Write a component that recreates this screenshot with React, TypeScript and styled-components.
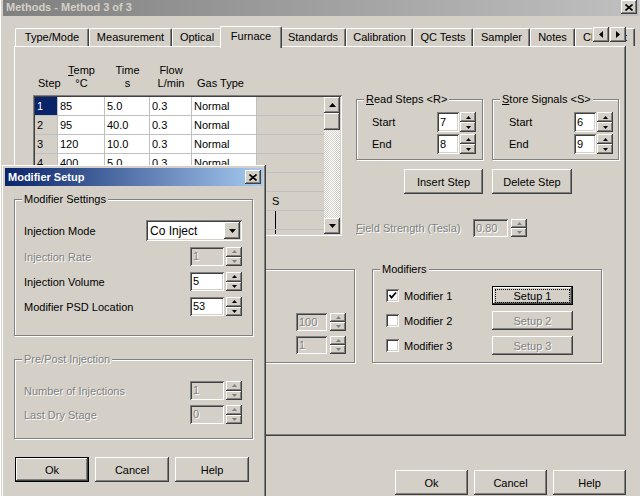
import React from 'react';
import styled, { createGlobalStyle, css } from 'styled-components';

const FACE = '#d4d0c8';

const GlobalStyle = createGlobalStyle`
  html, body { margin: 0; padding: 0; }
  body {
    font-family: "Liberation Sans", Arial, sans-serif;
    font-size: 11px;
    color: #000;
    background: ${FACE};
  }
  * { box-sizing: border-box; }
`;

const raised = css`
  background: ${FACE};
  box-shadow: inset -1px -1px #404040, inset 1px 1px #fff, inset -2px -2px #808080,
    inset 2px 2px ${FACE};
`;

const sunken = css`
  box-shadow: inset 1px 1px #808080, inset -1px -1px #fff, inset 2px 2px #404040,
    inset -2px -2px ${FACE};
`;

const disabledText = css`
  color: #808080;
  text-shadow: 1px 1px #fff;
`;

const Screen = styled.div`
  position: relative;
  width: 640px;
  height: 496px;
  overflow: hidden;
  background: ${FACE};
`;

const MainWindow = styled.div`
  display: flex;
  flex-direction: column;
  width: 642px;
  height: 520px;
  margin-top: -5px;
  padding: 3px;
  ${raised}
`;

const TitleBar = styled.div<{ $active?: boolean }>`
  display: flex;
  flex: none;
  align-items: center;
  justify-content: space-between;
  height: 18px;
  padding: 0 2px 0 3px;
  background: ${({ $active }) =>
    $active
      ? 'linear-gradient(to right, #0a246a, #a6caf0)'
      : 'linear-gradient(to right, #808080, #c0c0c0)'};
  color: ${({ $active }) => ($active ? '#fff' : FACE)};
  font-weight: bold;
  font-size: 11px;
  white-space: nowrap;
`;

const CloseButton = styled.div`
  display: flex;
  align-items: center;
  justify-content: center;
  width: 16px;
  height: 14px;
  ${raised}
`;

const TabStrip = styled.div`
  position: relative;
  display: flex;
  flex: none;
  align-items: flex-end;
  width: 623px;
  height: 20px;
  margin-top: 10px;
  padding-left: 12px;
  z-index: 1;
`;

const Tab = styled.div<{ $w: number; $active?: boolean }>`
  flex: none;
  width: ${({ $w }) => $w}px;
  height: 18px;
  line-height: 16px;
  text-align: center;
  white-space: nowrap;
  overflow: hidden;
  background: ${FACE};
  border-top: 1px solid #fff;
  border-left: 1px solid #fff;
  border-right: 1px solid #404040;
  border-radius: 2px 2px 0 0;
  box-shadow: inset -1px 0 #808080;
  ${({ $active, $w }) =>
    $active &&
    css`
      width: ${$w + 4}px;
      height: 22px;
      margin: 0 -2px -2px;
      padding-top: 1px;
      position: relative;
      z-index: 2;
    `}
`;

const TabScroll = styled.div`
  position: absolute;
  right: 0;
  bottom: 4px;
  display: flex;
  gap: 1px;
  padding-left: 1px;
  background: ${FACE};
  z-index: 3;
`;

const SmallButton = styled.div<{ $w: number; $h: number }>`
  display: flex;
  align-items: center;
  justify-content: center;
  width: ${({ $w }) => $w}px;
  height: ${({ $h }) => $h}px;
  ${raised}
`;

const TabPanel = styled.div`
  position: relative;
  flex: none;
  width: 612px;
  height: 390px;
  margin-left: 11px;
  padding: 18px 0 0 19px;
  ${raised}
`;

const TopArea = styled.div`
  display: flex;
`;

const LeftCol = styled.div`
  width: 309px;
`;

const GridHeader = styled.div`
  display: grid;
  grid-template-columns: 25px 47px 45px 42px 65px;
  align-items: end;
  height: 31px;
  padding-bottom: 5px;
  line-height: 13px;
`;

const HeadCell = styled.div<{ $align?: string }>`
  text-align: ${({ $align }) => $align || 'center'};
  padding-left: ${({ $align }) => ($align === 'left' ? '5px' : '0')};
  white-space: nowrap;
`;

const GridBox = styled.div`
  display: flex;
  width: 309px;
  height: 141px;
  padding: 2px;
  background: ${FACE};
  ${sunken}
`;

const GridRows = styled.div`
  flex: 1;
  overflow: hidden;
`;

const GridRow = styled.div`
  display: grid;
  grid-template-columns: 23px 47px 45px 42px 65px 1fr;
  height: 19px;
`;

const Cell = styled.div<{ $kind: 'step' | 'data' | 'blank'; $selected?: boolean }>`
  position: relative;
  height: 19px;
  padding-left: 2px;
  line-height: 18px;
  white-space: nowrap;
  overflow: hidden;
  border-bottom: 1px solid #c0c0c0;
  border-right: ${({ $kind }) => ($kind === 'blank' ? 'none' : '1px solid #c0c0c0')};
  background: ${({ $kind, $selected }) =>
    $selected ? '#0a246a' : $kind === 'data' ? '#fff' : FACE};
  color: ${({ $selected }) => ($selected ? '#fff' : '#000')};
`;

const MarkText = styled.span`
  padding-left: 13px;
`;

const MarkLine = styled.span`
  position: absolute;
  left: 18px;
  top: 0;
  width: 1px;
  height: 19px;
  background: #000;
`;

const ScrollBar = styled.div`
  display: flex;
  flex-direction: column;
  width: 16px;
`;

const ScrollTrack = styled.div`
  flex: 1;
  background: repeating-conic-gradient(#fff 0 25%, ${FACE} 0 50%) 0 0 / 2px 2px;
`;

const RightCol = styled.div`
  display: flex;
  flex-direction: column;
  margin-left: 14px;
`;

const GroupRow = styled.div`
  display: flex;
  gap: 9px;
  margin-top: 35px;
`;

const GroupBox = styled.div<{ $w: number; $h: number; $pad?: string }>`
  position: relative;
  width: ${({ $w }) => $w}px;
  height: ${({ $h }) => $h}px;
  padding: ${({ $pad }) => $pad || '0'};
  border: 1px solid #808080;
  box-shadow: inset 1px 1px #fff, 1px 1px #fff;
`;

const Legend = styled.span<{ $disabled?: boolean }>`
  position: absolute;
  top: -7px;
  left: 7px;
  padding: 0 2px;
  line-height: 13px;
  background: ${FACE};
  white-space: nowrap;
  ${({ $disabled }) => $disabled && disabledText}
`;

const FieldLine = styled.div<{ $labelW?: number }>`
  display: flex;
  align-items: center;
  height: 20px;
  & > span:first-child {
    width: ${({ $labelW }) => $labelW || 0}px;
    flex: none;
  }
`;

const StackRows = styled.div<{ $gap: number; $align?: string }>`
  display: flex;
  flex-direction: column;
  align-items: ${({ $align }) => $align || 'stretch'};
  gap: ${({ $gap }) => $gap}px;
`;

const Label = styled.span<{ $disabled?: boolean }>`
  white-space: nowrap;
  ${({ $disabled }) => $disabled && disabledText}
`;

const Button = styled.div<{ $w: number; $h: number; $default?: boolean; $disabled?: boolean }>`
  display: flex;
  align-items: center;
  justify-content: center;
  flex: none;
  width: ${({ $w }) => $w}px;
  height: ${({ $h }) => $h}px;
  ${raised}
  ${({ $default }) =>
    $default &&
    css`
      box-shadow: inset 0 0 0 1px #000, inset -2px -2px #404040, inset 2px 2px #fff,
        inset -3px -3px #808080;
    `}
  ${({ $disabled }) => $disabled && disabledText}
`;

const FocusRect = styled.span`
  display: flex;
  align-items: center;
  justify-content: center;
  width: 73px;
  height: 12px;
  outline: 1px dotted #000;
`;

const ButtonRow = styled.div<{ $gap: number; $pad?: string; $justify?: string }>`
  display: flex;
  gap: ${({ $gap }) => $gap}px;
  padding: ${({ $pad }) => $pad || '0'};
  justify-content: ${({ $justify }) => $justify || 'flex-start'};
`;

const BottomArea = styled.div`
  display: flex;
  margin-top: 31px;
`;

const CheckRow = styled.div`
  display: flex;
  align-items: center;
  height: 19px;
`;

const CheckBox = styled.span`
  display: flex;
  align-items: center;
  justify-content: center;
  width: 13px;
  height: 13px;
  margin-right: 5px;
  background: #fff;
  ${sunken}
`;

const SpinWrap = styled.div<{ $gap: number }>`
  display: flex;
  gap: ${({ $gap }) => $gap}px;
  flex: none;
`;

const EditBox = styled.div<{ $w: number; $h: number; $disabled?: boolean }>`
  width: ${({ $w }) => $w}px;
  height: ${({ $h }) => $h}px;
  padding: 0 3px;
  line-height: ${({ $h }) => $h}px;
  background: ${({ $disabled }) => ($disabled ? FACE : '#fff')};
  ${sunken}
  ${({ $disabled }) => $disabled && disabledText}
`;

const SpinButtons = styled.div<{ $h: number }>`
  display: flex;
  flex-direction: column;
  width: 16px;
  height: ${({ $h }) => $h}px;
  & > div {
    flex: 1;
  }
`;

const SpinHalf = styled.div`
  display: flex;
  align-items: center;
  justify-content: center;
  ${raised}
`;

const Modal = styled.div`
  position: absolute;
  left: 2px;
  top: 165px;
  display: flex;
  flex-direction: column;
  width: 264px;
  height: 340px;
  padding: 3px;
  z-index: 10;
  ${raised}
`;

const ModalBody = styled.div`
  display: flex;
  flex-direction: column;
  padding: 13px 0 0 9px;
`;

const SettingRow = styled.div<{ $h: number }>`
  display: flex;
  align-items: center;
  justify-content: space-between;
  height: ${({ $h }) => $h}px;
`;

const Combo = styled.div`
  display: flex;
  align-items: center;
  width: 96px;
  height: 21px;
  padding: 2px;
  background: #fff;
  ${sunken}
`;

const ComboText = styled.span`
  flex: 1;
  padding-left: 2px;
  font-size: 12px;
`;

type Dir = 'up' | 'down' | 'left' | 'right';

const Arrow: React.FC<{ dir: Dir; size?: number; color?: string }> = ({
  dir,
  size = 4,
  color = '#000',
}) => {
  const vertical = dir === 'up' || dir === 'down';
  const w = vertical ? size * 2 - 1 : size;
  const h = vertical ? size : size * 2 - 1;
  const pts = {
    up: `0,${h} ${w},${h} ${w / 2},0`,
    down: `0,0 ${w},0 ${w / 2},${h}`,
    left: `${w},0 ${w},${h} 0,${h / 2}`,
    right: `0,0 0,${h} ${w},${h / 2}`,
  }[dir];
  return (
    <svg width={w} height={h} viewBox={`0 0 ${w} ${h}`}>
      <polygon points={pts} fill={color} />
    </svg>
  );
};

const CloseGlyph = () => (
  <svg width="8" height="7" viewBox="0 0 8 7">
    <path d="M0.5 0.5 L7.5 6.5 M7.5 0.5 L0.5 6.5" stroke="#000" strokeWidth="1.6" />
  </svg>
);

const CheckGlyph = () => (
  <svg width="9" height="9" viewBox="0 0 9 9">
    <polyline points="1.5,4 3.5,6.5 8,1.5" fill="none" stroke="#000" strokeWidth="1.8" />
  </svg>
);

const Spin: React.FC<{
  value: string;
  editW: number;
  h?: number;
  gap?: number;
  disabled?: boolean;
}> = ({ value, editW, h = 19, gap = 2, disabled }) => {
  const c = disabled ? '#808080' : '#000';
  return (
    <SpinWrap $gap={gap}>
      <EditBox $w={editW} $h={h} $disabled={disabled}>
        {value}
      </EditBox>
      <SpinButtons $h={h}>
        <SpinHalf>
          <Arrow dir="up" size={3} color={c} />
        </SpinHalf>
        <SpinHalf>
          <Arrow dir="down" size={3} color={c} />
        </SpinHalf>
      </SpinButtons>
    </SpinWrap>
  );
};

const tabs = [
  { label: 'Type/Mode', w: 74 },
  { label: 'Measurement', w: 83 },
  { label: 'Optical', w: 50 },
  { label: 'Furnace', w: 58, active: true },
  { label: 'Standards', w: 66 },
  { label: 'Calibration', w: 67 },
  { label: 'QC Tests', w: 60 },
  { label: 'Sampler', w: 57 },
  { label: 'Notes', w: 45 },
  { label: 'Cleanout', w: 60 },
];

// rows 5-8 sit behind the Modifier Setup dialog; only the S / range marks show
const steps = [
  ['1', '85', '5.0', '0.3', 'Normal', ''],
  ['2', '95', '40.0', '0.3', 'Normal', ''],
  ['3', '120', '10.0', '0.3', 'Normal', ''],
  ['4', '400', '5.0', '0.3', 'Normal', ''],
  ['', '', '', '', '', ''],
  ['', '', '', '', '', 'S'],
  ['', '', '', '', '', '|'],
  ['', '', '', '', '', '|'],
];

const StepGrid = () => (
  <GridBox>
    <GridRows>
      {steps.map((row, i) => (
        <GridRow key={i}>
          <Cell $kind="step" $selected={i === 0}>
            {row[0]}
          </Cell>
          {row.slice(1, 5).map((v, j) => (
            <Cell key={j} $kind="data">
              {v}
            </Cell>
          ))}
          <Cell $kind="blank">
            {row[5] === 'S' && <MarkText>S</MarkText>}
            {row[5] === '|' && <MarkLine />}
          </Cell>
        </GridRow>
      ))}
    </GridRows>
    <ScrollBar>
      <SmallButton $w={16} $h={16}>
        <Arrow dir="up" size={4} />
      </SmallButton>
      <SmallButton $w={16} $h={17} />
      <ScrollTrack />
      <SmallButton $w={16} $h={16}>
        <Arrow dir="down" size={4} />
      </SmallButton>
    </ScrollBar>
  </GridBox>
);

const StepRangeGroup: React.FC<{ title: React.ReactNode; start: string; end: string; pad: number }> = ({
  title,
  start,
  end,
  pad,
}) => (
  <GroupBox $w={127} $h={61} $pad={`12px 0 0 ${pad}px`}>
    <Legend>{title}</Legend>
    <StackRows $gap={2}>
      <FieldLine $labelW={65}>
        <span>Start</span>
        <Spin value={start} editW={22} h={20} gap={1} />
      </FieldLine>
      <FieldLine $labelW={65}>
        <span>End</span>
        <Spin value={end} editW={22} h={20} gap={1} />
      </FieldLine>
    </StackRows>
  </GroupBox>
);

const ModifierSetup = () => (
  <Modal>
    <TitleBar $active>
      <span>Modifier Setup</span>
      <CloseButton>
        <CloseGlyph />
      </CloseButton>
    </TitleBar>
    <ModalBody>
      <GroupBox $w={239} $h={137} $pad="20px 10px 0 9px">
        <Legend>Modifier Settings</Legend>
        <StackRows $gap={6}>
          <SettingRow $h={21}>
            <Label>Injection Mode</Label>
            <Combo>
              <ComboText>Co Inject</ComboText>
              <SmallButton $w={16} $h={17}>
                <Arrow dir="down" size={4} />
              </SmallButton>
            </Combo>
          </SettingRow>
          <SettingRow $h={19}>
            <Label $disabled>Injection Rate</Label>
            <Spin value="1" editW={34} disabled />
          </SettingRow>
          <SettingRow $h={19}>
            <Label>Injection Volume</Label>
            <Spin value="5" editW={34} />
          </SettingRow>
          <SettingRow $h={19}>
            <Label>Modifier PSD Location</Label>
            <Spin value="53" editW={34} />
          </SettingRow>
        </StackRows>
      </GroupBox>
      <GroupBox $w={239} $h={80} $pad="21px 10px 0 9px" style={{ marginTop: 23 }}>
        <Legend $disabled>Pre/Post Injection</Legend>
        <StackRows $gap={5}>
          <SettingRow $h={19}>
            <Label $disabled>Number of Injections</Label>
            <Spin value="1" editW={34} disabled />
          </SettingRow>
          <SettingRow $h={19}>
            <Label $disabled>Last Dry Stage</Label>
            <Spin value="0" editW={34} disabled />
          </SettingRow>
        </StackRows>
      </GroupBox>
      <ButtonRow $gap={6} $pad="18px 0 0 1px">
        <Button $w={74} $h={25} $default>
          Ok
        </Button>
        <Button $w={74} $h={25}>
          Cancel
        </Button>
        <Button $w={74} $h={25}>
          Help
        </Button>
      </ButtonRow>
    </ModalBody>
  </Modal>
);

const App: React.FC = () => (
  <Screen>
    <GlobalStyle />
    <MainWindow>
      <TitleBar>
        <span>Methods - Method 3 of 3</span>
        <CloseButton>
          <CloseGlyph />
        </CloseButton>
      </TitleBar>
      <TabStrip>
        {tabs.map((t) => (
          <Tab key={t.label} $w={t.w} $active={t.active}>
            {t.label}
          </Tab>
        ))}
        <TabScroll>
          <SmallButton $w={16} $h={15}>
            <Arrow dir="left" size={4} />
          </SmallButton>
          <SmallButton $w={16} $h={15}>
            <Arrow dir="right" size={4} />
          </SmallButton>
        </TabScroll>
      </TabStrip>
      <TabPanel>
        <TopArea>
          <LeftCol>
            <GridHeader>
              <HeadCell $align="left">Step</HeadCell>
              <HeadCell>
                <u>T</u>emp
                <br />
                °C
              </HeadCell>
              <HeadCell>
                Time
                <br />s
              </HeadCell>
              <HeadCell>
                Flow
                <br />
                L/min
              </HeadCell>
              <HeadCell $align="left">Gas Type</HeadCell>
            </GridHeader>
            <StepGrid />
          </LeftCol>
          <RightCol>
            <GroupRow>
              <StepRangeGroup
                title={
                  <>
                    <u>R</u>ead Steps &lt;R&gt;
                  </>
                }
                start="7"
                end="8"
                pad={15}
              />
              <StepRangeGroup
                title={
                  <>
                    <u>S</u>tore Signals &lt;S&gt;
                  </>
                }
                start="6"
                end="9"
                pad={16}
              />
            </GroupRow>
            <ButtonRow $gap={9} $pad="9px 0 0 48px">
              <Button $w={79} $h={25}>
                Insert Step
              </Button>
              <Button $w={80} $h={25}>
                Delete Step
              </Button>
            </ButtonRow>
            <FieldLine $labelW={117} style={{ marginTop: 24 }}>
              <Label $disabled>
                <u>F</u>ield Strength (Tesla)
              </Label>
              <Spin value="0.80" editW={35} h={18} gap={3} disabled />
            </FieldLine>
          </RightCol>
        </TopArea>
        <BottomArea>
          <GroupBox $w={322} $h={94} $pad="43px 8px 0 0">
            <StackRows $gap={5} $align="flex-end">
              <Spin value="100" editW={31} h={18} gap={3} disabled />
              <Spin value="1" editW={31} h={18} gap={3} disabled />
            </StackRows>
          </GroupBox>
          <GroupBox $w={230} $h={94} $pad="16px 28px 0 13px" style={{ marginLeft: 17 }}>
            <Legend>Modifiers</Legend>
            <StackRows $gap={6}>
              {[1, 2, 3].map((n) => (
                <CheckRow key={n}>
                  <CheckBox>{n === 1 && <CheckGlyph />}</CheckBox>
                  <Label>Modifier {n}</Label>
                  <Button
                    $w={81}
                    $h={19}
                    $default={n === 1}
                    $disabled={n !== 1}
                    style={{ marginLeft: 'auto' }}
                  >
                    {n === 1 ? <FocusRect>Setup 1</FocusRect> : `Setup ${n}`}
                  </Button>
                </CheckRow>
              ))}
            </StackRows>
          </GroupBox>
        </BottomArea>
      </TabPanel>
      <ButtonRow $gap={6} $pad="34px 13px 0 0" $justify="flex-end">
        <Button $w={73} $h={25}>
          Ok
        </Button>
        <Button $w={73} $h={25}>
          Cancel
        </Button>
        <Button $w={73} $h={25}>
          Help
        </Button>
      </ButtonRow>
    </MainWindow>
    <ModifierSetup />
  </Screen>
);

export default App;
